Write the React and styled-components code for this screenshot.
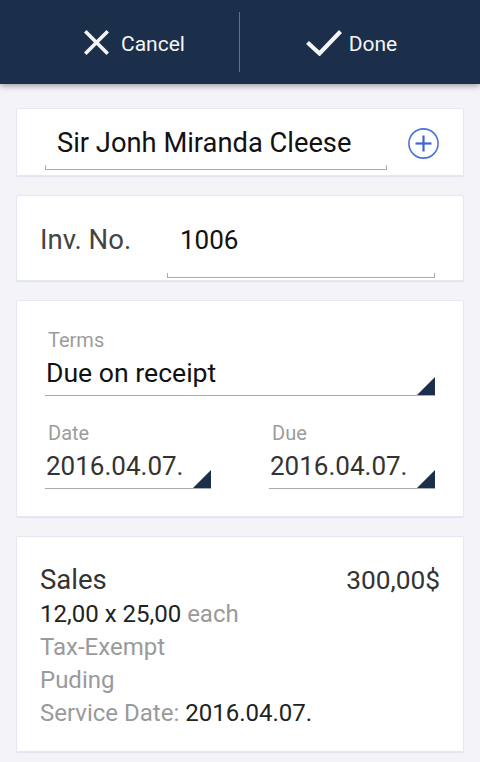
import React from "react";
import styled, { createGlobalStyle } from "styled-components";

const GlobalStyle = createGlobalStyle`
  html, body {
    margin: 0;
    padding: 0;
    background: #f3f3f8;
    min-height: 100%;
  }
  body {
    font-family: Roboto, "Noto Sans", "Liberation Sans", sans-serif;
    -webkit-font-smoothing: antialiased;
  }
  * { box-sizing: border-box; }
`;

const Page = styled.div`
  width: 480px;
  min-height: 762px;
  background: #f3f3f8;
`;

const Header = styled.header`
  height: 84px;
  background: #1c2f4a;
  display: flex;
  align-items: center;
  box-shadow: 0 2px 6px rgba(0, 0, 0, 0.35);
  position: relative;
  z-index: 1;
`;

const HeaderButton = styled.button`
  flex: none;
  width: ${(p) => p.$width}px;
  height: 100%;
  display: flex;
  align-items: center;
  justify-content: center;
  gap: ${(p) => p.$gap}px;
  padding: 0 ${(p) => p.$padRight}px 0 ${(p) => p.$padLeft}px;
  background: transparent;
  border: none;
  color: #f4f5f7;
  font-family: Roboto, "Noto Sans", sans-serif;
  font-size: 21px;
  cursor: pointer;
`;

const HeaderLabel = styled.span`
  line-height: 24px;
  margin-top: 3px;
`;

const Divider = styled.div`
  flex: none;
  width: 1px;
  height: 60px;
  background: rgba(255, 255, 255, 0.32);
`;

const Main = styled.main`
  padding: 24px 16px 13px;
  display: flex;
  flex-direction: column;
  gap: 19px;
`;

const Card = styled.section`
  background: #fff;
  border: 1px solid #e4e8f1;
  border-radius: 2px;
  box-shadow: 0 1px 1px #dfe4ee;
`;

const NameCard = styled(Card)`
  height: 68px;
  display: flex;
  align-items: flex-start;
  justify-content: space-between;
  padding: 19px 24px 0 28px;
`;

const TickField = styled.div`
  display: flex;
  flex-direction: column;
  width: ${(p) => (p.$width ? `${p.$width}px` : "auto")};
  flex: ${(p) => (p.$grow ? 1 : "none")};
`;

const FieldText = styled.div`
  font-size: ${(p) => p.$size}px;
  line-height: 30px;
  color: #111;
  padding-left: ${(p) => p.$indent}px;
  margin-bottom: ${(p) => p.$gap}px;
  white-space: nowrap;
`;

const Ticks = styled.div`
  height: 5px;
  border: 1px solid #ababab;
  border-top: none;
`;

const InvCard = styled(Card)`
  height: 86px;
  display: flex;
  align-items: flex-start;
  padding: 29px 28px 0 23px;
`;

const InvLabel = styled.div`
  width: 127px;
  font-size: 27.5px;
  line-height: 30px;
  color: #444;
`;

const TermsCard = styled(Card)`
  padding: 27px 28px 27px 28px;
  display: flex;
  flex-direction: column;
  gap: 25px;
`;

const DateGrid = styled.div`
  display: grid;
  grid-template-columns: 1fr 1fr;
  column-gap: 58px;
`;

const DropGroup = styled.div`
  display: flex;
  flex-direction: column;
`;

const DropLabel = styled.div`
  font-size: 20px;
  line-height: 24px;
  color: #9c9c9c;
  padding-left: 3px;
  margin-bottom: 6px;
`;

const DropField = styled.div`
  display: flex;
  align-items: flex-end;
  justify-content: space-between;
  border-bottom: 1px solid #ababab;
`;

const DropValue = styled.div`
  font-size: ${(p) => p.$size}px;
  line-height: 30px;
  color: ${(p) => p.$color};
  padding-left: 1px;
  margin-bottom: 7px;
  white-space: nowrap;
`;

const Corner = styled.div`
  width: 0;
  height: 0;
  border-left: 18px solid transparent;
  border-bottom: 18px solid #1c2f4a;
  flex: none;
`;

const SalesCard = styled(Card)`
  padding: 25px 23px 21px 23px;
`;

const SalesHead = styled.div`
  display: flex;
  justify-content: space-between;
  align-items: baseline;
  line-height: 36px;
  color: #333;
`;

const SalesTitle = styled.span`
  font-size: 27.5px;
`;

const SalesAmount = styled.span`
  font-size: 26.3px;
`;

const SalesLine = styled.div`
  font-size: 24px;
  line-height: 33px;
  color: ${(p) => (p.$muted ? "#9a9a9a" : "#222")};
`;

const Muted = styled.span`
  color: #9a9a9a;
`;

const Strong = styled.span`
  color: #222;
`;

const CloseIcon = () => (
  <svg width="25" height="25" viewBox="5 5 14 14">
    <path
      fill="#f4f5f7"
      d="M19 6.41L17.59 5 12 10.59 6.41 5 5 6.41 10.59 12 5 17.59 6.41 19 12 13.41 17.59 19 19 17.59 13.41 12z"
    />
  </svg>
);

const CheckIcon = () => (
  <svg width="37" height="27" viewBox="0 0 37 27">
    <polyline
      points="2.5,13.5 14.5,24.5 35.5,2.5"
      fill="none"
      stroke="#f4f5f7"
      strokeWidth="4.2"
      strokeLinejoin="miter"
    />
  </svg>
);

const PlusIcon = () => (
  <svg width="31" height="31" viewBox="0 0 31 31">
    <circle cx="15.5" cy="15.5" r="14.6" fill="none" stroke="#4a72d8" strokeWidth="1.6" />
    <line x1="7.5" y1="15.5" x2="23.5" y2="15.5" stroke="#3f67d4" strokeWidth="2.2" />
    <line x1="15.5" y1="7.5" x2="15.5" y2="23.5" stroke="#3f67d4" strokeWidth="2.2" />
  </svg>
);

const Dropdown = ({ label, value, color = "#111", size = 26 }) => (
  <DropGroup>
    <DropLabel>{label}</DropLabel>
    <DropField>
      <DropValue $color={color} $size={size}>{value}</DropValue>
      <Corner />
    </DropField>
  </DropGroup>
);

export default function App() {
  return (
    <Page>
      <GlobalStyle />
      <Header>
        <HeaderButton $width={239} $gap={12} $padLeft={30} $padRight={0}>
          <CloseIcon />
          <HeaderLabel>Cancel</HeaderLabel>
        </HeaderButton>
        <Divider />
        <HeaderButton $width={240} $gap={7} $padLeft={0} $padRight={18}>
          <CheckIcon />
          <HeaderLabel>Done</HeaderLabel>
        </HeaderButton>
      </Header>
      <Main>
        <NameCard>
          <TickField $width={342}>
            <FieldText $size={27.3} $indent={12} $gap={7}>Sir Jonh Miranda Cleese</FieldText>
            <Ticks />
          </TickField>
          <PlusIcon />
        </NameCard>
        <InvCard>
          <InvLabel>Inv. No.</InvLabel>
          <TickField $grow>
            <FieldText $size={26} $indent={13} $gap={18}>1006</FieldText>
            <Ticks />
          </TickField>
        </InvCard>
        <TermsCard>
          <Dropdown label="Terms" value="Due on receipt" size={26.6} />
          <DateGrid>
            <Dropdown label="Date" value="2016.04.07." color="#333" />
            <Dropdown label="Due" value="2016.04.07." color="#333" />
          </DateGrid>
        </TermsCard>
        <SalesCard>
          <SalesHead>
            <SalesTitle>Sales</SalesTitle>
            <SalesAmount>300,00$</SalesAmount>
          </SalesHead>
          <SalesLine>
            12,00 x 25,00 <Muted>each</Muted>
          </SalesLine>
          <SalesLine $muted>Tax-Exempt</SalesLine>
          <SalesLine $muted>Puding</SalesLine>
          <SalesLine $muted>
            Service Date: <Strong>2016.04.07.</Strong>
          </SalesLine>
        </SalesCard>
      </Main>
    </Page>
  );
}
